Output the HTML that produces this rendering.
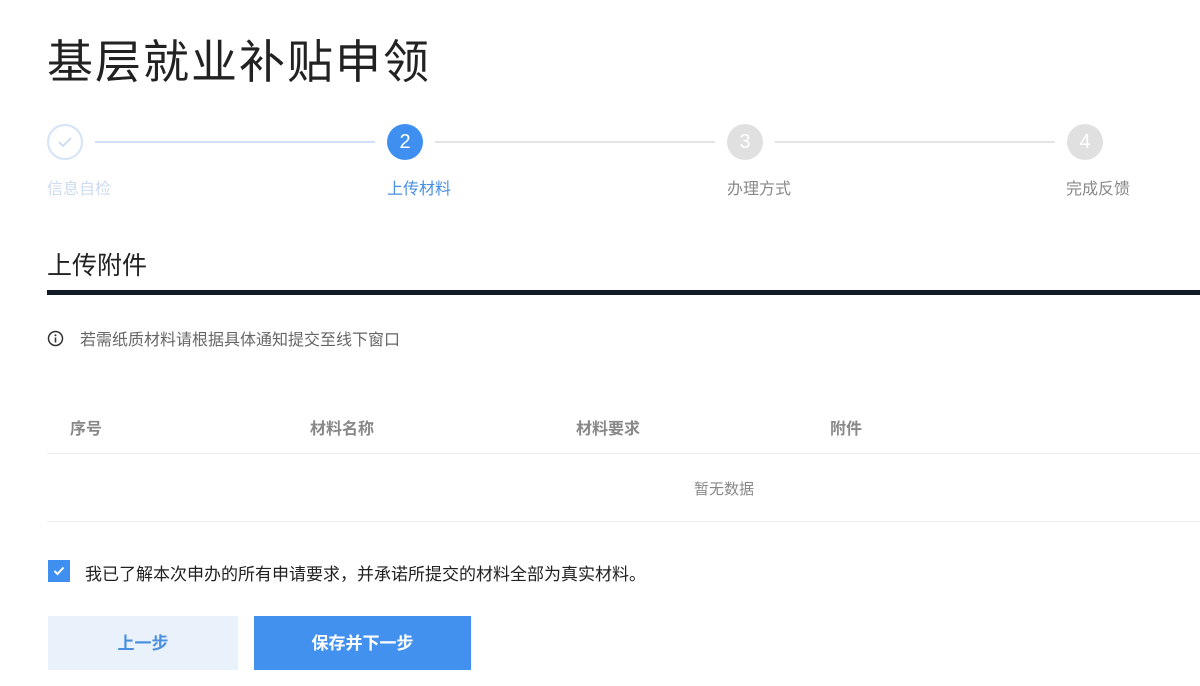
<!DOCTYPE html>
<html><head><meta charset="utf-8"><style>
*{margin:0;padding:0;box-sizing:border-box}
body{width:1200px;height:686px;overflow:hidden;background:#fff;font-family:"Liberation Sans","Noto Sans CJK SC",sans-serif;position:relative;color:#333}
.a{position:absolute;white-space:nowrap}
.c{position:absolute;width:36px;height:36px;border-radius:50%;top:124px;display:flex;align-items:center;justify-content:center;font-size:20px;color:#fff}
.l{position:absolute;top:141px;height:2px}
.s{position:absolute;top:175px;font-size:16px}
.th{position:absolute;top:415px;font-size:16px;font-weight:bold;color:#888}
</style></head><body>
<div class="a" style="left:47px;top:26px;font-size:46px;color:#222;letter-spacing:2px">基层就业补贴申领</div>

<div class="c" style="left:47px;border:2px solid #d4e3f7"><svg width="16" height="12" viewBox="0 0 16 12"><path d="M2 6l4 4 8-8" fill="none" stroke="#c7d9f2" stroke-width="1.6"/></svg></div>
<div class="l" style="left:95px;width:280px;background:#cfe0f7"></div>
<div class="c" style="left:387px;background:#3f8ff0">2</div>
<div class="l" style="left:435px;width:280px;background:#e4e4e4"></div>
<div class="c" style="left:727px;background:#e0e0e0">3</div>
<div class="l" style="left:775px;width:280px;background:#e4e4e4"></div>
<div class="c" style="left:1067px;background:#e0e0e0">4</div>
<div class="s" style="left:47px;color:#cddcf2">信息自检</div>
<div class="s" style="left:387px;color:#4a8fe0">上传材料</div>
<div class="s" style="left:727px;color:#888">办理方式</div>
<div class="s" style="left:1066px;color:#888">完成反馈</div>

<div class="a" style="left:47px;top:246px;font-size:25px;color:#222">上传附件</div>
<div class="a" style="left:47px;top:290px;width:1153px;height:5px;background:#111a26"></div>

<svg class="a" style="left:47px;top:330px" width="17" height="17" viewBox="0 0 17 17"><circle cx="8.5" cy="8.5" r="7" fill="none" stroke="#333" stroke-width="1.5"/><circle cx="8.5" cy="5.3" r="1" fill="#333"/><path d="M8.5 7.5v5" stroke="#333" stroke-width="1.6"/></svg>
<div class="a" style="left:80px;top:326px;font-size:16px;color:#666">若需纸质材料请根据具体通知提交至线下窗口</div>

<div class="th" style="left:70px">序号</div>
<div class="th" style="left:310px">材料名称</div>
<div class="th" style="left:576px">材料要求</div>
<div class="th" style="left:830px">附件</div>
<div class="a" style="left:47px;top:453px;width:1153px;height:1px;background:#eee"></div>
<div class="a" style="left:694px;top:478px;font-size:15px;color:#888">暂无数据</div>
<div class="a" style="left:47px;top:521px;width:1153px;height:1px;background:#eee"></div>

<div class="a" style="left:48px;top:560px;width:22px;height:22px;background:#3f8ff0;display:flex;align-items:center;justify-content:center"><svg width="12" height="10" viewBox="0 0 12 10"><path d="M1.5 5l3 3 6-6.5" fill="none" stroke="#fff" stroke-width="2"/></svg></div>
<div class="a" style="left:85px;top:560px;font-size:17px;color:#222">我已了解本次申办的所有申请要求，并承诺所提交的材料全部为真实材料。</div>

<div class="a" style="left:48px;top:616px;width:190px;height:54px;background:#e9f2fb;color:#4a8fe0;font-size:17px;font-weight:bold;display:flex;align-items:center;justify-content:center;padding-bottom:3px">上一步</div>
<div class="a" style="left:254px;top:616px;width:217px;height:54px;background:#4391ef;color:#fff;font-size:17px;font-weight:bold;display:flex;align-items:center;justify-content:center;padding-bottom:3px">保存并下一步</div>
</body></html>
